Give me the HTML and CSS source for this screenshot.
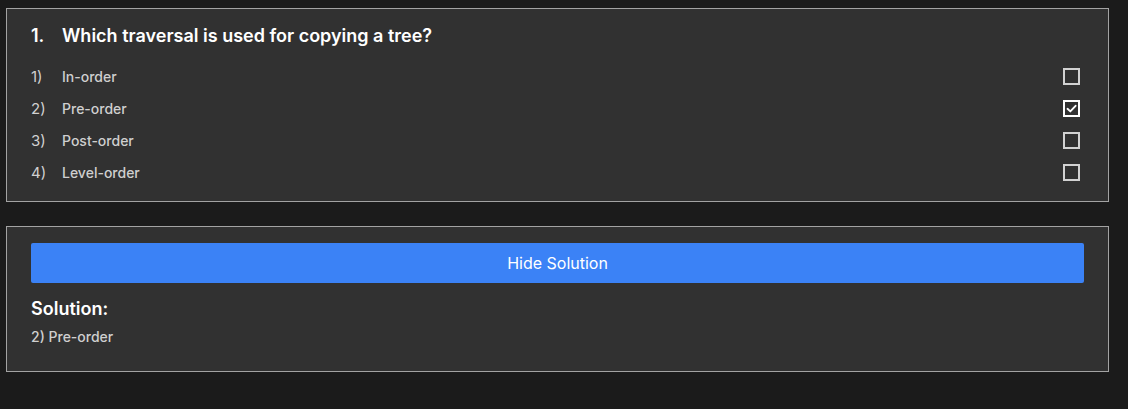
FILE: index.html
```html
<!DOCTYPE html>
<html lang="en">
<head>
<meta charset="utf-8">
<title>Quiz</title>
<link rel="stylesheet" href="styles.css">
</head>
<body>
<main class="page">
  <section class="card question">
    <h2 class="q-title"><span class="q-num">1.</span><span>Which traversal is used for copying a tree?</span></h2>
    <ul class="options">
      <li class="option"><span class="opt-num">1)</span><span class="opt-text">In-order</span><span class="box"></span></li>
      <li class="option"><span class="opt-num">2)</span><span class="opt-text">Pre-order</span><span class="box checked"><svg viewBox="0 0 17 17" width="17" height="17"><path d="M4.5 8.8 L7.3 11.4 L12.6 5.8" fill="none" stroke="#ffffff" stroke-width="1.9" stroke-linecap="round" stroke-linejoin="round"/></svg></span></li>
      <li class="option"><span class="opt-num">3)</span><span class="opt-text">Post-order</span><span class="box"></span></li>
      <li class="option"><span class="opt-num">4)</span><span class="opt-text">Level-order</span><span class="box"></span></li>
    </ul>
  </section>
  <section class="card solution">
    <button class="toggle">Hide Solution</button>
    <h3 class="sol-title">Solution:</h3>
    <p class="sol-text">2) Pre-order</p>
  </section>
</main>
</body>
</html>
```
FILE: styles.css
```css
html, body {
  margin: 0;
  padding: 0;
  background: #1b1b1b;
  font-family: Inter, "Noto Sans", "Liberation Sans", sans-serif;
}
.page {
  padding: 8px 19px 0 6px;
  display: flex;
  flex-direction: column;
  gap: 24px;
}
.card {
  background: #313131;
  border: 1px solid #a3a3a3;
  padding: 0 24px;
}
.question {
  padding-top: 13px;
  padding-bottom: 19px;
}
.q-title {
  margin: 0;
  font-size: 18px;
  line-height: 28px;
  font-weight: 600;
  color: #ffffff;
  display: flex;
}
.q-num {
  width: 31px;
}
.options {
  list-style: none;
  margin: 16px 0 0;
  padding: 0;
  display: flex;
  flex-direction: column;
  gap: 12px;
}
.option {
  display: flex;
  align-items: center;
  height: 20px;
  font-size: 14px;
  font-weight: 500;
  color: #cfcfcf;
}
.opt-num {
  width: 31px;
  font-size: 15px;
  font-weight: 400;
  color: #d0d0d0;
}
.opt-text {
  flex: 1;
}
.box {
  width: 17px;
  height: 17px;
  box-sizing: border-box;
  border: 2px solid #d2d2d2;
  margin-right: 4px;
  position: relative;
}
.box.checked {
  border-color: #ffffff;
}
.box svg {
  position: absolute;
  left: -2px;
  top: -2px;
}
.solution {
  padding-top: 16px;
  padding-bottom: 24px;
}
.toggle {
  display: block;
  width: 100%;
  height: 40px;
  border: none;
  border-radius: 2px;
  background: #3b82f6;
  color: #ffffff;
  font-family: inherit;
  font-size: 16px;
  font-weight: 400;
}
.sol-title {
  margin: 12px 0 0;
  font-size: 18px;
  line-height: 28px;
  font-weight: 600;
  color: #ffffff;
}
.sol-text {
  margin: 4px 0 0;
  font-size: 14px;
  line-height: 20px;
  font-weight: 500;
  color: #cfcfcf;
}
```
